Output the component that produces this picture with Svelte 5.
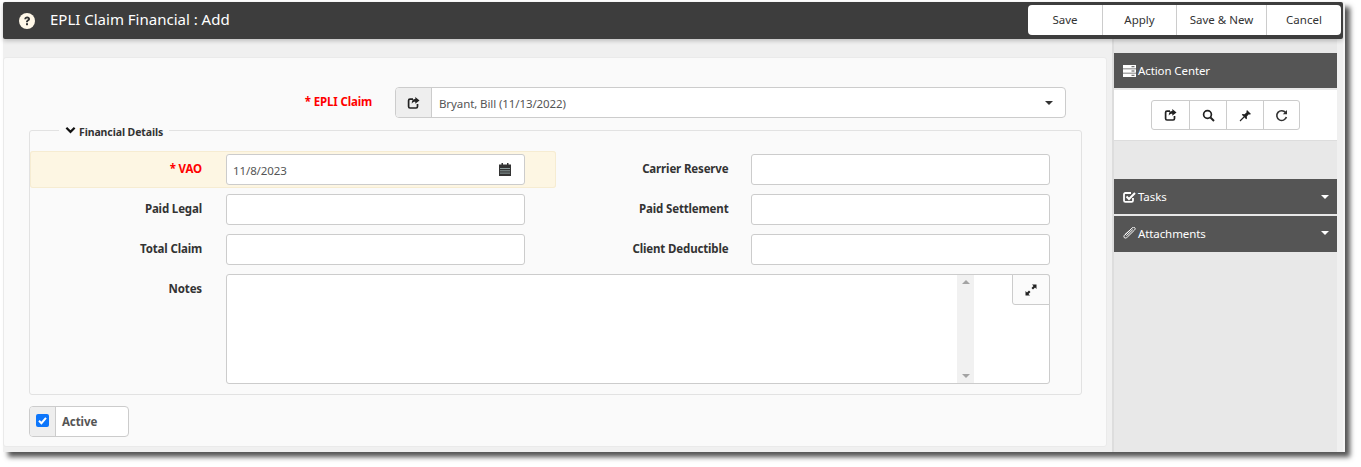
<script>
  const buttons = ['Save', 'Apply', 'Save & New', 'Cancel'];
</script>

<div class="window">
  <div class="inner">
    <header class="topbar">
      <svg class="help" viewBox="0 0 16 16" width="16" height="16">
        <circle cx="8" cy="8" r="8" fill="#fff8e8" />
        <path d="M5.3 6.2C5.4 4.6 6.6 3.6 8.2 3.600c1.600 0 2.800 1 2.800 2.300 0 1.200-.7 1.700-1.400 2.200-.5.3-.7.6-.7 1.100H7c0-1.100.4-1.700 1.100-2.200.5-.3.8-.6.8-1 0-.5-.3-.8-.8-.8s-.8.3-.9 1z" fill="#333" />
        <rect x="7" y="10.200" width="2" height="2" fill="#333" />
      </svg>
      <h1>EPLI Claim Financial : Add</h1>
      <div class="actions">
        {#each buttons as b, i}
          <button class="act a{i}">{b}</button>
        {/each}
      </div>
    </header>

    <div class="body">
      <main class="content">
        <section class="card">
          <div class="claim-row">
            <span class="lbl req claim-lbl">* EPLI Claim</span>
            <div class="select">
              <span class="addon">
                <svg viewBox="0 0 14 14" width="14" height="14"><path d="M10.500 8v2.600c0 .8-.6 1.400-1.400 1.400H3c-.8 0-1.400-.6-1.400-1.400V4.600c0-.8.6-1.400 1.400-1.400h3" fill="none" stroke="#222" stroke-width="1.700" /><path d="M8.300 1v2C5.800 3.100 4.600 4.800 4.800 7.800 5.600 6.300 6.600 5.800 8.300 5.800v2l4.200-3.400z" fill="#222" /></svg>
              </span>
              <span class="value">Bryant, Bill (11/13/2022)</span>
              <span class="caret"></span>
            </div>
          </div>

          <fieldset>
            <legend>
              <svg viewBox="0 0 12 8" width="11" height="8"><path d="M1.500 1.500 6 6l4.500-4.500" fill="none" stroke="#111" stroke-width="2.400" /></svg>
              <span>Financial Details</span>
            </legend>
            <div class="row">
              <div class="cell hl">
                <span class="lbl req">* VAO</span>
                <div class="input date">
                  <span class="dateval">11/8/2023</span>
                  <svg viewBox="0 0 12 13" width="12" height="13"><path d="M0 1.500h2.500V0h1.500v1.500h4V0h1.500v1.500H12V13H0z" fill="#333" /><path d="M1 5.500h10M1 7.800h10M1 10.100h10" stroke="#9aa" stroke-width=".9" /></svg>
                </div>
              </div>
              <div class="cell right">
                <span class="lbl">Carrier Reserve</span>
                <div class="input"></div>
              </div>
            </div>
            <div class="row">
              <div class="cell">
                <span class="lbl">Paid Legal</span>
                <div class="input"></div>
              </div>
              <div class="cell right">
                <span class="lbl">Paid Settlement</span>
                <div class="input"></div>
              </div>
            </div>
            <div class="row">
              <div class="cell">
                <span class="lbl">Total Claim</span>
                <div class="input"></div>
              </div>
              <div class="cell right">
                <span class="lbl">Client Deductible</span>
                <div class="input"></div>
              </div>
            </div>
            <div class="row">
              <div class="cell wide">
                <span class="lbl">Notes</span>
                <div class="notes">
                  <div class="scroll">
                    <span class="up"></span>
                    <span class="down"></span>
                  </div>
                  <button class="expand" aria-label="Expand">
                    <svg viewBox="0 0 12 12" width="12" height="12"><path d="M7 0.500h4.500V5L10 3.500 8 5.500 6.500 4 8.500 2z" fill="#222" /><path d="M5 11.500H.5V7L2 8.500 4 6.500 5.500 8 3.500 10z" fill="#222" /></svg>
                  </button>
                </div>
              </div>
            </div>
          </fieldset>

          <div class="active">
            <span class="chk">
              <svg viewBox="0 0 13 13" width="13" height="13"><rect width="13" height="13" rx="2" fill="#0d76fb" /><path d="M3 6.800 5.400 9.200 10 3.800" fill="none" stroke="#fff" stroke-width="2" /></svg>
            </span>
            <span class="active-lbl">Active</span>
          </div>
        </section>
      </main>

      <aside class="side">
        <div class="panel-head">
          <svg viewBox="0 0 13 12" width="13" height="12"><path d="M0 0h13v3.400H0zM0 4.300h13v3.400H0zM0 8.600h13V12H0z" fill="#fff" /><path d="M8.500 1.700h3M8.500 6h3M8.500 10.300h3" stroke="#555" stroke-width="1" /></svg>
          <span>Action Center</span>
        </div>
        <div class="tools">
          <div class="toolgroup">
            <span class="tool">
              <svg viewBox="0 0 14 14" width="14" height="14"><path d="M10.500 8v2.600c0 .8-.6 1.400-1.400 1.400H3c-.8 0-1.400-.6-1.400-1.400V4.600c0-.8.6-1.400 1.400-1.400h3" fill="none" stroke="#222" stroke-width="1.700" /><path d="M8.300 1v2C5.800 3.100 4.600 4.800 4.800 7.800 5.600 6.300 6.600 5.800 8.300 5.800v2l4.200-3.400z" fill="#222" /></svg>
            </span>
            <span class="tool">
              <svg viewBox="0 0 13 13" width="13" height="13"><circle cx="5.500" cy="5.500" r="3.900" fill="none" stroke="#222" stroke-width="1.700" /><path d="M8.500 8.500 12 12" stroke="#222" stroke-width="2" /></svg>
            </span>
            <span class="tool">
              <svg viewBox="0 0 13 13" width="13" height="13"><path d="M8 1l4 4-1 .5-1.500 0L7.800 7.500 8 9.500 7.200 10.200 2.800 5.800 3.500 5 5.500 5.200 7.500 3.500 7.500 2z" fill="#222" /><path d="M5 8 1 12" stroke="#222" stroke-width="1.100" /></svg>
            </span>
            <span class="tool">
              <svg viewBox="0 0 13 13" width="13" height="13"><path d="M10.600 3.600A4.900 4.900 0 1 0 11.400 8" fill="none" stroke="#333" stroke-width="1.600" /><path d="M12 1v4.200H7.800z" fill="#333" /></svg>
            </span>
          </div>
        </div>
        <div class="panel-head collapsed tasks">
          <svg viewBox="0 0 13 12" width="13" height="12"><path d="M10 7v2.500c0 .8-.6 1.400-1.400 1.400H2.400c-.8 0-1.400-.6-1.400-1.400V3.400C1 2.600 1.600 2 2.400 2H8" fill="none" stroke="#fff" stroke-width="1.800" /><path d="M3.500 5.500 6 8l6-6" fill="none" stroke="#fff" stroke-width="2" /></svg>
          <span>Tasks</span>
          <i class="tri"></i>
        </div>
        <div class="panel-head collapsed att">
          <svg viewBox="0 0 13 12" width="13" height="12"><path d="M9 1.200 2 7.600c-1.200 1.100-1.400 2.300-.7 3 .8.800 2 .5 3.100-.6l7-6.800c.9-1 1-2 .2-2.600-.7-.6-1.700-.4-2.600.4z" fill="none" stroke="#fff" stroke-width="1" /><path d="M9.800 2.600 3.300 8.800M7.600 2.600 1.800 8" stroke="#fff" stroke-width="1" /></svg>
          <span>Attachments</span>
          <i class="tri"></i>
        </div>
      </aside>
    </div>
  </div>
</div>

<style>
  :global(body) {
    margin: 0;
    background: #fff;
    min-height: 467px;
  }
  .window {
    margin: 2px 0 0 3px;
    width: 1342px;
    height: 450px;
    background: #f6f6f6;
    box-shadow: 5px 5px 5px #555;
    font-family: "Noto Sans", "Open Sans", sans-serif;
    font-size: 11.5px;
    color: #333;
    letter-spacing: -0.1px;
  }
  .inner {
    width: 1340px;
    height: 100%;
    display: flex;
    flex-direction: column;
  }
  .topbar {
    flex: none;
    height: 37px;
    box-sizing: border-box;
    background: #3d3d3d;
    border-radius: 2px;
    display: flex;
    align-items: center;
    padding: 0 2px 0 16px;
    color: #fff;
    box-shadow: 0 2px 4px rgba(0, 0, 0, 0.2);
    position: relative;
  }
  .help {
    margin-right: 15px;
    flex: none;
  }
  h1 {
    margin: 0 0 3px;
    font-size: 15px;
    font-weight: 400;
    letter-spacing: 0;
  }
  .actions {
    margin: -1px 0 0 auto;
    display: flex;
    height: 30px;
    background: #fff;
    border-radius: 4px;
  }
  .act {
    border: 0;
    border-left: 1px solid #ccc;
    background: transparent;
    font: inherit;
    font-size: 11.5px;
    color: #333;
    padding: 0 0 2px;
  }
  .a0 { width: 74px; border-left: 0; }
  .a1 { width: 74px; }
  .a2 { width: 90px; }
  .a3 { width: 75px; }

  .body {
    flex: 1;
    min-height: 0;
    display: flex;
    background: #f0f0f0;
  }
  .content {
    width: 1110px;
    box-sizing: border-box;
    padding: 18px 0 0 0;
    border-right: 1px solid #ddd;
    flex: none;
  }
  .card {
    box-sizing: border-box;
    width: 1104px;
    height: 390px;
    background: #fafafa;
    border: 1px solid #eaeaea;
    border-radius: 3px;
    padding: 29px 0 0 25px;
  }
  .claim-row {
    display: flex;
    align-items: flex-start;
  }
  .lbl {
    box-sizing: border-box;
    width: 172px;
    padding: 7px 0 0;
    text-align: right;
    font-weight: 700;
    color: #333;
    flex: none;
    margin-right: 24px;
    letter-spacing: -0.15px;
  }
  .req {
    color: #f00;
  }
  .claim-lbl {
    width: 343px;
    margin-right: 23px;
  }
  .select {
    width: 671px;
    height: 31px;
    box-sizing: border-box;
    border: 1px solid #ccc;
    border-radius: 4px;
    background: #fff;
    display: flex;
    align-items: center;
  }
  .addon {
    width: 36px;
    height: 100%;
    flex: none;
    background: #eee;
    border-right: 1px solid #ccc;
    border-radius: 3px 0 0 3px;
    display: flex;
    align-items: center;
    justify-content: center;
    box-sizing: border-box;
  }
  .value {
    margin-left: 7px;
    padding-top: 1px;
    color: #555;
    flex: 1;
  }
  .caret {
    width: 0;
    height: 0;
    border: 4px solid transparent;
    border-top: 4px solid #333;
    border-bottom: 0;
    margin-right: 12px;
  }
  fieldset {
    box-sizing: border-box;
    width: 1053px;
    height: 274px;
    margin: 3px 0 0;
    padding: 12px 0 0;
    border: 1px solid #e2e2e2;
    border-radius: 3px;
    min-width: 0;
  }
  legend {
    margin-left: 29px;
    padding: 4px 6px 0;
    font-weight: 700;
    font-size: 10.5px;
    line-height: 14px;
    color: #333;
    display: flex;
    align-items: center;
    gap: 3px;
  }
  legend svg {
    margin-top: -4px;
  }
  .row {
    display: flex;
    margin-bottom: 3px;
  }
  .cell {
    box-sizing: border-box;
    width: 526px;
    padding: 3px 0;
    display: flex;
    align-items: flex-start;
    border-radius: 3px;
  }
  .hl {
    background: #fdf6e3;
    box-shadow: inset 0 0 0 1px #f6ecd2;
  }
  .right .lbl {
    width: 173px;
    margin-right: 22px;
  }
  .wide {
    width: 1021px;
  }
  .input {
    box-sizing: border-box;
    width: 299px;
    height: 31px;
    background: #fff;
    border: 1px solid #ccc;
    border-radius: 3px;
  }
  .date {
    display: flex;
    align-items: center;
    justify-content: space-between;
    padding: 0 13px 0 6px;
    border-width: 1.5px;
  }
  .dateval {
    color: #555;
    padding-top: 1px;
  }
  .notes {
    box-sizing: border-box;
    width: 824px;
    height: 110px;
    background: #fff;
    border: 1px solid #ccc;
    border-radius: 3px;
    position: relative;
  }
  .scroll {
    position: absolute;
    top: 0;
    bottom: 0;
    right: 75px;
    width: 17px;
    background: #f1f1f1;
  }
  .up,
  .down {
    position: absolute;
    left: 5px;
    width: 0;
    height: 0;
    border: 4px solid transparent;
  }
  .up {
    top: 5px;
    border-top: 0;
    border-bottom: 4px solid #a3a3a3;
  }
  .down {
    bottom: 5px;
    border-bottom: 0;
    border-top: 4px solid #a3a3a3;
  }
  .expand {
    position: absolute;
    top: -1px;
    right: -1px;
    width: 38px;
    height: 31px;
    box-sizing: border-box;
    background: #fbfbfb;
    border: 1px solid #ccc;
    border-radius: 0 3px 0 3px;
    padding: 0;
    display: flex;
    align-items: center;
    justify-content: center;
  }
  .active {
    box-sizing: border-box;
    margin-top: 11px;
    width: 100px;
    height: 31px;
    background: #fff;
    border: 1px solid #ccc;
    border-radius: 4px;
    display: flex;
  }
  .chk {
    width: 26px;
    background: #eee;
    border-right: 1px solid #ccc;
    border-radius: 3px 0 0 3px;
    display: flex;
    align-items: center;
    justify-content: center;
    padding-bottom: 2px;
    box-sizing: border-box;
  }
  .active-lbl {
    margin-left: 6px;
    font-weight: 700;
    color: #555;
    line-height: 30px;
  }

  .side {
    width: 224px;
    flex: none;
    background: #e8e8e8;
    padding-top: 14px;
    box-sizing: border-box;
    border-left: 1px solid #ddd;
  }
  .panel-head {
    box-sizing: border-box;
    height: 35px;
    background: #555;
    color: #fff;
    display: flex;
    align-items: center;
    padding: 0 9px;
    gap: 2px;
    font-size: 11.5px;
  }
  .tools {
    margin-top: 2px;
    height: 51px;
    background: #fff;
    border-bottom: 1px solid #ddd;
    box-sizing: border-box;
    display: flex;
    justify-content: center;
    padding: 10px 0 0 0;
  }
  .toolgroup {
    display: flex;
    height: 30px;
    box-sizing: border-box;
    border: 1px solid #ccc;
    border-radius: 3px;
  }
  .tool {
    width: 37px;
    display: flex;
    align-items: center;
    justify-content: center;
    border-left: 1px solid #ccc;
    box-sizing: border-box;
  }
  .tool:first-child {
    border-left: 0;
  }
  .tool:last-child {
    width: 36px;
  }
  .tasks {
    margin-top: 38px;
  }
  .att {
    margin-top: 2px;
    height: 36px;
    padding-bottom: 2px;
  }
  .tri {
    margin-left: auto;
    margin-right: -1px;
    width: 0;
    height: 0;
    border: 4px solid transparent;
    border-top: 4px solid #fff;
    border-bottom: 0;
  }
</style>
